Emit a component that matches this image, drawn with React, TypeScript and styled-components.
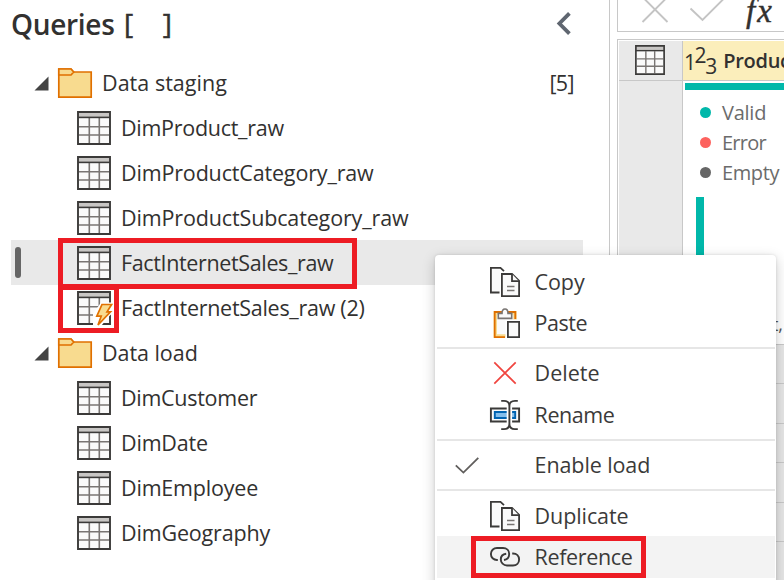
import React from 'react';
import styled, { createGlobalStyle } from 'styled-components';

const ink = '#323130';
const line = '#c8c8c8';
const red = '#ed1c24';
const teal = '#01b8aa';

const GlobalStyle = createGlobalStyle`
  * { box-sizing: border-box; }
  body { margin: 0; overflow: hidden; background: #fff; }
`;

const Page = styled.div`
  position: relative;
  display: flex;
  width: 784px;
  height: 580px;
  overflow: hidden;
  background: #fff;
  color: ${ink};
  font-family: 'Open Sans', sans-serif;
  font-size: 21.5px;
  svg { display: block; flex: none; overflow: visible; }
`;

const QueriesPane = styled.aside`
  flex: none;
  width: 610px;
  border-right: 1px solid ${line};
`;

const PaneHeader = styled.header`
  display: flex;
  align-items: flex-start;
  height: 60px;
  padding-left: 11px;
`;

const PaneTitle = styled.h1`
  width: 113px;
  margin: 0;
  font-size: 28px;
  font-weight: 600;
  line-height: 48px;
  letter-spacing: -0.3px;
`;

const Brackets = styled.div`
  display: flex;
  justify-content: space-between;
  width: 48px;
  margin-right: 384px;
  font-size: 28px;
  line-height: 46px;
  -webkit-text-stroke: 0.5px ${ink};
`;

const CollapseButton = styled.button`
  padding: 0;
  margin-top: 12px;
  border: 0;
  background: none;
`;

const TreeRow = styled.div<{ $child?: boolean; $selected?: boolean }>`
  position: relative;
  display: flex;
  align-items: center;
  width: 572px;
  height: 45px;
  margin-left: 11px;
  padding-left: ${p => (p.$child ? 66 : 23)}px;
  background: ${p => (p.$selected ? '#e9e9e9' : 'transparent')};
`;

const Marker = styled.span`
  position: absolute;
  left: 4px;
  top: 7px;
  width: 6px;
  height: 31px;
  border-radius: 3px;
  background: #666;
`;

const Label = styled.span<{ $track: number }>`
  margin-left: 10px;
  line-height: 30px;
  white-space: nowrap;
  letter-spacing: ${p => p.$track}px;
`;

const Count = styled.span`
  margin-left: auto;
  padding-right: 9px;
  letter-spacing: -0.6px;
`;

const Callout = styled.span<{ $x: number; $y: number; $w: number; $h: number }>`
  position: absolute;
  z-index: 1;
  left: ${p => p.$x}px;
  top: ${p => p.$y}px;
  width: ${p => p.$w}px;
  height: ${p => p.$h}px;
  border: 5px solid ${red};
`;

const DataPane = styled.main`
  display: flex;
  flex-direction: column;
  gap: 7px;
  width: 174px;
  padding-left: 7px;
`;

const FormulaBar = styled.div`
  display: flex;
  flex: none;
  height: 32px;
  padding-left: 24px;
  border: solid ${line};
  border-width: 0 0 1px 1px;
`;

const Fx = styled.span`
  margin: -6px 0 0 24px;
  font: italic 33px/34px 'Liberation Serif', serif;
  letter-spacing: 2px;
  -webkit-text-stroke: 0.4px ${ink};
`;

const Grid = styled.div`
  flex: 1;
  display: grid;
  grid-template-columns: 64px 1fr;
  grid-template-rows: 40px 263px 1fr;
  padding: 1px 0 0 1px;
  border: solid ${line};
  border-width: 1px 0 0 1px;
`;

const Corner = styled.div`
  display: grid;
  place-items: center;
  padding: 0 1px 2px 0;
  background: #e9e9e9;
  border: solid ${line};
  border-width: 0 1px 1px 0;
`;

const ColumnHeader = styled.div`
  display: flex;
  align-items: center;
  overflow: hidden;
  padding-left: 1px;
  background: #fbeebb;
  border-bottom: 1px solid ${line};
`;

const TypeDigit = styled.span<{ $shift: number }>`
  flex: none;
  width: 10.6px;
  font-size: 21px;
  line-height: 24px;
  transform: translateY(${p => p.$shift}px);
`;

const ColumnName = styled.span`
  margin-left: 7.5px;
  font-size: 20px;
  font-weight: 600;
  letter-spacing: -0.3px;
`;

const RowNumbers = styled.div`
  background: #e9e9e9;
  border-right: 1px solid ${line};
`;

const Profile = styled.div`
  display: flex;
  flex-direction: column;
  padding-left: 2px;
  overflow: hidden;
`;

const QualityBar = styled.div`
  flex: none;
  height: 7px;
  margin: 2px 0 7px;
  background: ${teal};
`;

const Stat = styled.div<{ $track: number }>`
  display: flex;
  flex: none;
  align-items: center;
  gap: 11px;
  height: 30px;
  padding-left: 15px;
  color: #6b6b6b;
  font-size: 20px;
  letter-spacing: ${p => p.$track}px;
`;

const StatName = styled.span`
  padding-top: 1px;
`;

const Dot = styled.i<{ $color: string }>`
  width: 11px;
  height: 11px;
  border-radius: 50%;
  background: ${p => p.$color};
`;

const Histogram = styled.div`
  flex: none;
  width: 8px;
  height: 110px;
  margin: 10px 0 0 11px;
  background: ${teal};
`;

const Summary = styled.div`
  align-self: flex-end;
  margin: 5px 1px 0 0;
  color: #555;
  font-size: 18px;
  line-height: 24px;
`;

const Rows = styled.div`
  grid-column: 1 / -1;
  background: repeating-linear-gradient(${line} 0 1px, #e6e6e6 1px 39.4px);
`;

const Menu = styled.nav`
  position: absolute;
  left: 435px;
  top: 255px;
  width: 341px;
  height: 340px;
  padding: 6px 1px 0 2px;
  border-radius: 4px;
  background: #fff;
  box-shadow: 0 4px 14px rgba(0, 0, 0, 0.2), 0 0 3px rgba(0, 0, 0, 0.12);
  color: #3b3a39;
`;

const MenuItem = styled.div<{ $active?: boolean }>`
  position: relative;
  display: grid;
  grid-template-columns: 53px 30px 1fr;
  align-items: center;
  height: 41.4px;
  background: ${p => (p.$active ? '#f3f3f3' : 'transparent')};
`;

const CheckSlot = styled.span`
  padding-left: 18px;
`;

const MenuLabel = styled.span<{ $track: number }>`
  margin-left: 14.6px;
  line-height: 30px;
  letter-spacing: ${p => p.$track}px;
`;

const Separator = styled.div`
  height: 2px;
  margin: 3px 0 4px;
  background: #e6e6e6;
`;

const Folder = () => (
  <svg width="34" height="30" viewBox="0 0 34 30" fill="#f8db8f" stroke="#e07000" strokeWidth="1.7">
    <path d="M.8 1H13L15.5 4H33.2V29.2H.8Z" />
    <path d="M.8 7H13L15.7 4L13 1H.8Z" />
  </svg>
);

const Triangle = () => (
  <svg width="15" height="14" viewBox="0 0 15 14"><path d="M14.5 .5V14.5H.5Z" fill="#444" /></svg>
);

const TableIcon = ({ size = 34, bolt = false }: { size?: number; bolt?: boolean }) => (
  <svg width={size} height={size} viewBox="0 0 34 34" fill="none">
    <path d="M1 1H33V33H1Z" fill="#fafafa" />
    <path d="M1 1H33V6H1Z" fill="#c8c6c4" />
    <path d="M12.3 7V32M22.3 7V32M2 15.7H32M2 24H32" stroke="#797573" strokeWidth="1.6" />
    <path d="M1 6.4H33" stroke="#3b3a39" strokeWidth="1.6" />
    <path d="M1 1H33V33H1Z" stroke="#3b3a39" strokeWidth="1.9" />
    {bolt && (
      <>
        <path d="M24.5 12.5H36V20L31 25L22 36H17V23Z" fill="#fff" stroke="#fff" strokeWidth="2" />
        <path d="M25 13.5H34.6L30 20.8H33.5L21 34L24.2 25.2H19.8Z" fill="#f8db8f" stroke="#e07000" strokeWidth="1.7" />
      </>
    )}
  </svg>
);

const CopyIcon = () => (
  <svg width="30" height="30" viewBox="0 0 30 30" fill="#fafafa" stroke="#3b3a39" strokeWidth="1.8">
    <path d="M1 1H10V26H1Z" stroke="none" />
    <path d="M9.5 25.5H.9V.9H10.5L14 4.2" fill="none" />
    <path d="M11.9 7H22L29.1 14V29.1H11.9Z" />
    <path d="M22 7V14.2H29" />
    <path d="M17 19.5H24.5M17 23.5H24.5" stroke="#797573" strokeWidth="1.5" />
  </svg>
);

const PasteIcon = () => (
  <svg width="30" height="30" viewBox="0 0 30 30" fill="none">
    <path d="M5.3 4.8H25V28H5.3Z" fill="#fafafa" stroke="#f8db8f" strokeWidth="3.4" />
    <path d="M15 29.1H4.7V4H25.3V11" stroke="#e07000" strokeWidth="1.8" />
    <path d="M15.4 11.5H31V31H15.4Z" fill="#fff" />
    <path d="M8.3 10.4V5.4H12C12 2.5 13 1 15 1S18 2.5 18 5.4H21.7V10.4Z" fill="#fafafa" stroke="#797573" strokeWidth="1.6" />
    <path d="M17.9 13.8H29.1V29.1H17.9Z" fill="#fafafa" stroke="#3b3a39" strokeWidth="1.8" />
  </svg>
);

const DeleteIcon = () => (
  <svg width="30" height="30" viewBox="0 0 30 30" stroke="#f0453f" strokeWidth="1.7">
    <path d="M4.3 4.3L25.7 25.7M25.7 4.3L4.3 25.7" />
  </svg>
);

const RenameIcon = () => (
  <svg width="30" height="30" viewBox="0 0 30 30" fill="none" stroke="#3b3a39" strokeWidth="1.9">
    <path d="M.9 8.5H29.1V21.5H.9Z" fill="#fafafa" />
    <path d="M4.8 12H25.2V18H4.8Z" fill="#83beec" stroke="#0063b1" />
    <path d="M19.4 5V25" stroke="#fff" strokeWidth="5.4" />
    <path d="M11.2 .9H14C17.5 .9 19.4 3 19.4 6V24C19.4 27 17.5 29.1 14 29.1H11.2M27.8 .9H25C21.5 .9 19.4 3 19.4 6M19.4 24C19.4 27 21.5 29.1 25 29.1H27.8" />
  </svg>
);

const LinkIcon = () => (
  <svg width="30" height="20" viewBox="0 0 30 20" fill="none" stroke="#3b3a39" strokeWidth="1.9">
    <path d="M7.8 13H7C3.5 13 .9 10.4 .9 7S3.5 1 7 1H13C16.6 1 19.2 3.6 19.2 7S16.8 12.6 14 13" />
    <path d="M16.2 6.7C13 7 10.8 9.3 10.8 12.5S13.4 18.5 17 18.5H23C26.6 18.5 29.1 16 29.1 12.5S26.6 6.6 23 6.5H22.2" />
  </svg>
);

const CheckIcon = () => (
  <svg width="24" height="17" viewBox="0 0 24 17" fill="none" stroke="#605e5c" strokeWidth="1.8">
    <path d="M.8 8.4L8.4 15.6L23.3 .8" />
  </svg>
);

type Item = { name: string; track: number; kind?: 'folder'; count?: string; selected?: boolean; bolt?: boolean };

const queries: Item[] = [
  { name: 'Data staging', track: 0.03, kind: 'folder', count: '[5]' },
  { name: 'DimProduct_raw', track: -0.28 },
  { name: 'DimProductCategory_raw', track: -0.16 },
  { name: 'DimProductSubcategory_raw', track: -0.14 },
  { name: 'FactInternetSales_raw', track: -0.36, selected: true },
  { name: 'FactInternetSales_raw (2)', track: -0.28, bolt: true },
  { name: 'Data load', track: -0.05, kind: 'folder' },
  { name: 'DimCustomer', track: -0.28 },
  { name: 'DimDate', track: -0.2 },
  { name: 'DimEmployee', track: -0.2 },
  { name: 'DimGeography', track: -0.16 },
];

const FolderGroup = styled.span`
  display: flex;
  align-items: center;
  gap: 9px;
`;

const QueryRow = ({ item }: { item: Item }) => (
  <TreeRow $child={item.kind !== 'folder'} $selected={item.selected}>
    {item.selected && <Marker />}
    {item.kind === 'folder' ? (
      <FolderGroup><Triangle /><Folder /></FolderGroup>
    ) : (
      <TableIcon bolt={item.bolt} />
    )}
    <Label $track={item.track}>{item.name}</Label>
    {item.count && <Count>{item.count}</Count>}
    {item.selected && <Callout $x={47} $y={-2} $w={299} $h={51} />}
    {item.bolt && <Callout $x={47} $y={0} $w={61} $h={48} />}
  </TreeRow>
);

const Action = ({ name, track, icon, checked, active }: {
  name: string; track: number; icon?: React.ReactNode; checked?: boolean; active?: boolean;
}) => (
  <MenuItem $active={active}>
    <CheckSlot>{checked && <CheckIcon />}</CheckSlot>
    <span>{icon}</span>
    <MenuLabel $track={track}>{name}</MenuLabel>
    {active && <Callout $x={34} $y={0} $w={175} $h={42} />}
  </MenuItem>
);

export default function App() {
  return (
    <Page>
      <GlobalStyle />
      <QueriesPane>
        <PaneHeader>
          <PaneTitle>Queries</PaneTitle>
          <Brackets><span>[</span><span>]</span></Brackets>
          <CollapseButton aria-label="Collapse">
            <svg width="15" height="23" viewBox="0 0 15 23" fill="none" stroke="#5f6670" strokeWidth="3.8">
              <path d="M13.4 1.4L3.4 11.5L13.4 21.6" />
            </svg>
          </CollapseButton>
        </PaneHeader>
        {queries.map(q => <QueryRow key={q.name} item={q} />)}
      </QueriesPane>

      <DataPane>
        <FormulaBar>
          <svg width="80" height="23" viewBox="0 0 80 23" fill="none" stroke="#c4c4c4" strokeWidth="1.9">
            <path d="M.5 -3L25.5 22M25.5 -3L.5 22" />
            <path d="M48.5 8.5L60.5 20L83 -2.5" />
          </svg>
          <Fx>fx</Fx>
        </FormulaBar>
        <Grid>
          <Corner><TableIcon size={30} /></Corner>
          <ColumnHeader>
            <TypeDigit $shift={1}>1</TypeDigit>
            <TypeDigit $shift={-6}>2</TypeDigit>
            <TypeDigit $shift={5}>3</TypeDigit>
            <ColumnName>Product</ColumnName>
          </ColumnHeader>
          <RowNumbers />
          <Profile>
            <QualityBar />
            <Stat $track={-0.25}><Dot $color={teal} /><StatName>Valid</StatName></Stat>
            <Stat $track={-0.75}><Dot $color="#fd625e" /><StatName>Error</StatName></Stat>
            <Stat $track={-0.4}><Dot $color="#666" /><StatName>Empty</StatName></Stat>
            <Histogram />
            <Summary>t,</Summary>
          </Profile>
          <Rows />
        </Grid>
      </DataPane>

      <Menu>
        <Action name="Copy" track={-0.1} icon={<CopyIcon />} />
        <Action name="Paste" track={-0.5} icon={<PasteIcon />} />
        <Separator />
        <Action name="Delete" track={0} icon={<DeleteIcon />} />
        <Action name="Rename" track={-0.45} icon={<RenameIcon />} />
        <Separator />
        <Action name="Enable load" track={-0.1} checked />
        <Separator />
        <Action name="Duplicate" track={-0.1} icon={<CopyIcon />} />
        <Action name="Reference" track={-0.35} icon={<LinkIcon />} active />
      </Menu>
    </Page>
  );
}
